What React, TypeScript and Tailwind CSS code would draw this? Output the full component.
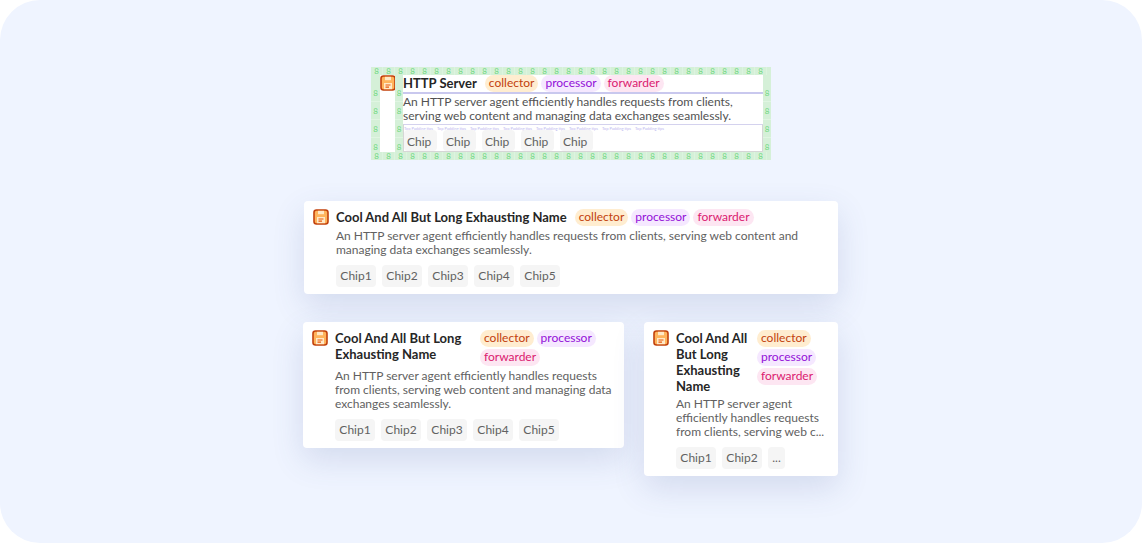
const font = { fontFamily: "Lato, 'Noto Sans', sans-serif" };

function SaveIcon() {
  return (
    <svg width="16" height="16" viewBox="0 0 16 16" className="shrink-0">
      <rect x="1" y="1" width="14" height="14" rx="2.5" fill="#ffb45c" stroke="#c2410c" strokeWidth="1.6" />
      <path d="M5 1.8h6v3.4H5z" fill="#ffe9c7" />
      <path d="M4 8h8v6.2H4z" fill="#ffe9c7" />
      <path d="M5.5 10h5M5.5 12.2h3.5" stroke="#ea580c" strokeWidth="1.2" />
    </svg>
  );
}

function Tags({ className = "" }: { className?: string }) {
  return (
    <div className={`flex flex-wrap gap-x-[3px] gap-y-[2px] text-[12px] leading-[16px] ${className}`}>
      <span className="rounded-full bg-[#ffedd0] px-[4px] pb-[1px] text-[#c2410c]">collector</span>
      <span className="rounded-full bg-[#f5e8ff] px-[4px] pb-[1px] text-[#9310d8]">processor</span>
      <span className="rounded-full bg-[#fde6f2] px-[4px] pb-[1px] text-[#db1a70]">forwarder</span>
    </div>
  );
}

function Chips({ items }: { items: string[] }) {
  return (
    <div className="mt-[8px] flex gap-[6px] text-[12px] leading-[22px] text-[#616161]">
      {items.map((c, i) => (
        <span key={i} className={`rounded bg-[#f5f5f5] text-center ${c === "..." ? "w-[17px]" : "w-[40px]"}`}>{c}</span>
      ))}
    </div>
  );
}

function EightRow({ n }: { n: number }) {
  return (
    <div className="flex h-[8px] shrink-0 overflow-hidden bg-[#d5f0d8] text-[8px] leading-[8px] text-[#6fd880]">
      {Array.from({ length: n }).map((_, i) => (
        <span key={i} className="w-[12px] shrink-0 border-r border-[#dcf4df] text-center">8</span>
      ))}
    </div>
  );
}

function EightCol({ n, className = "" }: { n: number; className?: string }) {
  return (
    <div className={`flex shrink-0 flex-col overflow-hidden bg-[#d5f0d8] pt-[9px] text-[8px] leading-[18px] text-[#6fd880] ${className}`}>
      {Array.from({ length: n }).map((_, i) => (
        <span key={i} className="h-[18px] shrink-0 border-b border-[#e0f5e2] text-center">8</span>
      ))}
    </div>
  );
}

function SpecCard() {
  return (
    <div className="flex h-[93px] w-[400px] flex-col">
      <EightRow n={33} />
      <div className="flex min-h-0 flex-1">
        <EightCol n={4} className="w-[9px]" />
        <div className="w-[15px] shrink-0 bg-white">
          <SaveIcon />
        </div>
        <EightCol n={4} className="w-[8px]" />
        <div className="flex min-w-0 flex-1 flex-col bg-white">
          <div className="flex h-[19px] items-start border-b-2 border-[#c9c8ee]">
            <span className="text-[13px] font-bold leading-[17px] text-[#262626]">HTTP Server</span>
            <Tags className="ml-[8px] flex-nowrap" />
          </div>
          <p className="mt-[1px] text-[12px] leading-[14px] text-[#525252]">
            An HTTP server agent efficiently handles requests from clients,<br />
            serving web content and managing data exchanges seamlessly.
          </p>
          <div className="mt-[1px] flex-1 border border-[#d6d6d6] border-t-[#d4d2ee]">
            <div className="flex h-[5px] pt-[1px] text-[4px] leading-[5px] text-[#bdb8ef]">
              {Array.from({ length: 8 }).map((_, i) => (
                <span key={i} className="w-[33px] whitespace-nowrap">Top Padding tips</span>
              ))}
            </div>
            <div className="flex gap-[6px] text-[12px] leading-[19px] text-[#616161]">
              {[0, 1, 2, 3, 4].map((i) => (
                <span key={i} className="w-[33px] rounded bg-[#f5f5f5] px-[3px] pt-[2px]">Chip</span>
              ))}
            </div>
          </div>
        </div>
        <EightCol n={4} className="w-[8px]" />
      </div>
      <EightRow n={33} />
    </div>
  );
}

function Card({ desc, chips, tagsClass, titleClass, className }: {
  desc: React.ReactNode; chips: string[]; tagsClass?: string; titleClass?: string; className: string;
}) {
  return (
    <div className={`flex items-start gap-[7px] rounded bg-white p-[8px] pl-[9px] shadow-[0_12px_32px_rgba(70,90,150,0.16)] ${className}`}>
      <SaveIcon />
      <div className="min-w-0 flex-1">
        <div className="flex items-start">
          <div className={`text-[13px] font-bold leading-[16px] text-[#262626] ${titleClass ?? ""}`}>Cool And All But Long Exhausting Name</div>
          <Tags className={tagsClass} />
        </div>
        <p className="mt-[3px] text-[12px] leading-[14px] text-[#616161]">{desc}</p>
        <Chips items={chips} />
      </div>
    </div>
  );
}

export default function App() {
  return (
    <div className="h-[543px] w-[1142px] overflow-hidden bg-white" style={font}>
      <div className="flex h-full flex-col items-center rounded-[40px] bg-[#eff4ff] pt-[67px]">
        <SpecCard />
        <Card
          className="mt-[41px] h-[93px] w-[534px]"
          titleClass="whitespace-nowrap"
          tagsClass="ml-[8px] flex-nowrap"
          desc={<>An HTTP server agent efficiently handles requests from clients, serving web content and<br />managing data exchanges seamlessly.</>}
          chips={["Chip1", "Chip2", "Chip3", "Chip4", "Chip5"]}
        />
        <div className="mt-[28px] flex items-start gap-[20px] pr-[1px]">
          <Card
            className="h-[126px] w-[321px]"
            titleClass="w-[145px] shrink-0"
            tagsClass="w-[130px] shrink-0"
            desc={<>An HTTP server agent efficiently handles requests<br />from clients, serving web content and managing data<br />exchanges seamlessly.</>}
            chips={["Chip1", "Chip2", "Chip3", "Chip4", "Chip5"]}
          />
          <Card
            className="h-[154px] w-[194px]"
            titleClass="w-[81px] shrink-0"
            tagsClass="w-[66px] shrink-0"
            desc={<>An HTTP server agent<br />efficiently handles requests<br />from clients, serving web c...</>}
            chips={["Chip1", "Chip2", "..."]}
          />
        </div>
      </div>
    </div>
  );
}
